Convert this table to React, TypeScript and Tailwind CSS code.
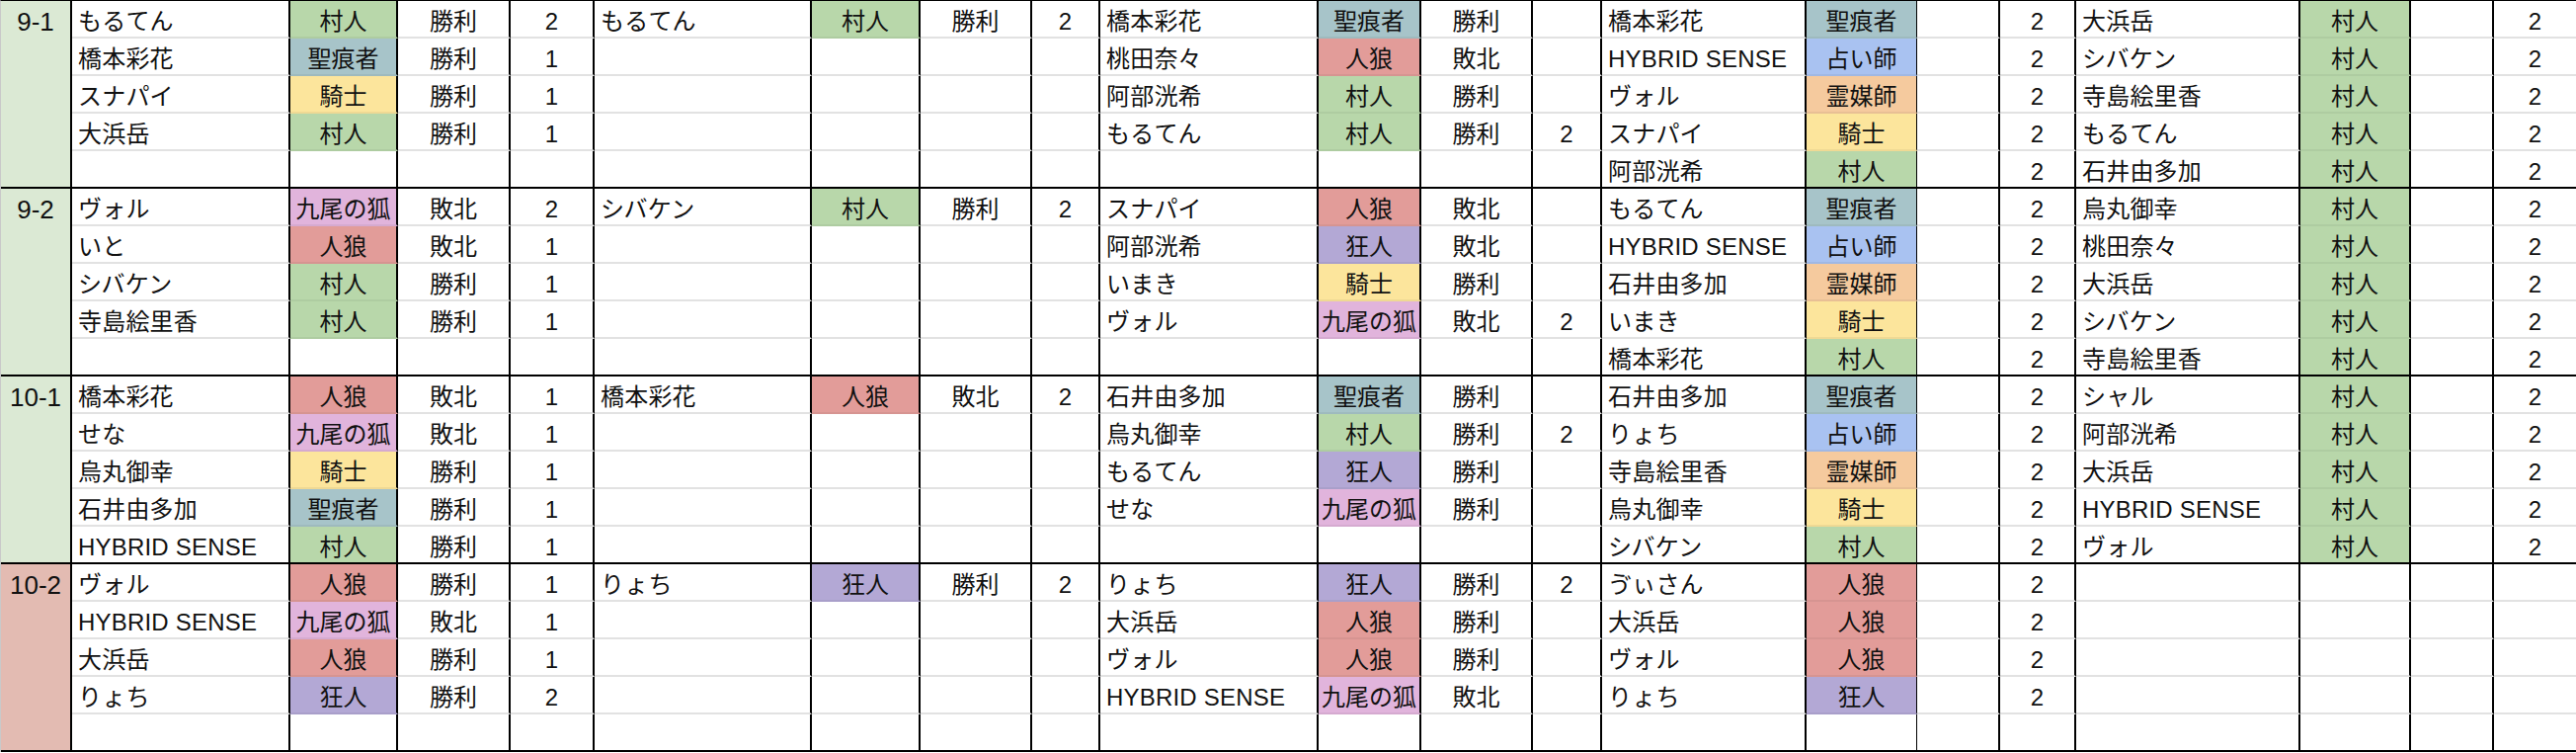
type Group = {
  label: string;
  labelBg: string;
  rows: string[];
};

// each row: A(name|role|result|num) B(...) C(...) D(name|role|num) E(name|role|num)
const groups: Group[] = [
  {
    label: "9-1",
    labelBg: "bg-[#dbe9d4]",
    rows: [
      "もるてん|村人|勝利|2|もるてん|村人|勝利|2|橋本彩花|聖痕者|勝利||橋本彩花|聖痕者|2|大浜岳|村人|2",
      "橋本彩花|聖痕者|勝利|1|||||桃田奈々|人狼|敗北||HYBRID SENSE|占い師|2|シバケン|村人|2",
      "スナパイ|騎士|勝利|1|||||阿部洸希|村人|勝利||ヴォル|霊媒師|2|寺島絵里香|村人|2",
      "大浜岳|村人|勝利|1|||||もるてん|村人|勝利|2|スナパイ|騎士|2|もるてん|村人|2",
      "||||||||||||阿部洸希|村人|2|石井由多加|村人|2",
    ],
  },
  {
    label: "9-2",
    labelBg: "bg-[#dbe9d4]",
    rows: [
      "ヴォル|九尾の狐|敗北|2|シバケン|村人|勝利|2|スナパイ|人狼|敗北||もるてん|聖痕者|2|烏丸御幸|村人|2",
      "いと|人狼|敗北|1|||||阿部洸希|狂人|敗北||HYBRID SENSE|占い師|2|桃田奈々|村人|2",
      "シバケン|村人|勝利|1|||||いまき|騎士|勝利||石井由多加|霊媒師|2|大浜岳|村人|2",
      "寺島絵里香|村人|勝利|1|||||ヴォル|九尾の狐|敗北|2|いまき|騎士|2|シバケン|村人|2",
      "||||||||||||橋本彩花|村人|2|寺島絵里香|村人|2",
    ],
  },
  {
    label: "10-1",
    labelBg: "bg-[#dbe9d4]",
    rows: [
      "橋本彩花|人狼|敗北|1|橋本彩花|人狼|敗北|2|石井由多加|聖痕者|勝利||石井由多加|聖痕者|2|シャル|村人|2",
      "せな|九尾の狐|敗北|1|||||烏丸御幸|村人|勝利|2|りょち|占い師|2|阿部洸希|村人|2",
      "烏丸御幸|騎士|勝利|1|||||もるてん|狂人|勝利||寺島絵里香|霊媒師|2|大浜岳|村人|2",
      "石井由多加|聖痕者|勝利|1|||||せな|九尾の狐|勝利||烏丸御幸|騎士|2|HYBRID SENSE|村人|2",
      "HYBRID SENSE|村人|勝利|1|||||||||シバケン|村人|2|ヴォル|村人|2",
    ],
  },
  {
    label: "10-2",
    labelBg: "bg-[#e3bbb2]",
    rows: [
      "ヴォル|人狼|勝利|1|りょち|狂人|勝利|2|りょち|狂人|勝利|2|ゔぃさん|人狼|2|||",
      "HYBRID SENSE|九尾の狐|敗北|1|||||大浜岳|人狼|勝利||大浜岳|人狼|2|||",
      "大浜岳|人狼|勝利|1|||||ヴォル|人狼|勝利||ヴォル|人狼|2|||",
      "りょち|狂人|勝利|2|||||HYBRID SENSE|九尾の狐|敗北||りょち|狂人|2|||",
      "|||||||||||||||||",
    ],
  },
];

const roleBg: Record<string, string> = {
  村人: "bg-[#b8d7aa]",
  聖痕者: "bg-[#a7c4c9]",
  騎士: "bg-[#fce59c]",
  人狼: "bg-[#e29c99]",
  九尾の狐: "bg-[#e1b4dc]",
  狂人: "bg-[#b3a8d5]",
  占い師: "bg-[#a9c2f1]",
  霊媒師: "bg-[#f5ca9e]",
};

type Kind = "name" | "role" | "center";

function Cell({
  kind,
  text,
  row,
  edge = "border-r-2",
}: {
  kind: Kind;
  text: string;
  row: number;
  edge?: string;
}) {
  const bg = kind === "role" && text ? roleBg[text] : "bg-white";
  const line =
    row < 4
      ? kind === "role" && text
        ? "border-b-2 border-b-black/5"
        : "border-b-2 border-b-[#e2e2e2]"
      : "";
  return (
    <div
      className={`flex items-center pt-[6px] whitespace-nowrap overflow-hidden border-r-black ${edge} ${line} ${bg} ${
        kind === "name" ? "justify-start pl-[6px] tracking-[0.2px]" : "justify-center"
      }`}
    >
      {text}
    </div>
  );
}

function Row({ fields, row }: { fields: string[]; row: number }) {
  const f = (i: number) => fields[i] ?? "";
  const game = (o: number) => [
    <Cell key={`n${o}`} kind="name" text={f(o)} row={row} />,
    <Cell key={`r${o}`} kind="role" text={f(o + 1)} row={row} />,
    <Cell key={`w${o}`} kind="center" text={f(o + 2)} row={row} />,
    <Cell key={`p${o}`} kind="center" text={f(o + 3)} row={row} />,
  ];
  return (
    <>
      {game(0)}
      {game(4)}
      {game(8)}
      <Cell kind="name" text={f(12)} row={row} />
      <Cell kind="role" text={f(13)} row={row} edge="border-r" />
      <Cell kind="center" text="" row={row} />
      <Cell kind="center" text={f(14)} row={row} />
      <Cell kind="name" text={f(15)} row={row} />
      <Cell kind="role" text={f(16)} row={row} />
      <Cell kind="center" text="" row={row} />
      <Cell kind="center" text={f(17)} row={row} edge="border-r-0" />
    </>
  );
}

export default function App() {
  return (
    <div className="w-[2608px] h-[762px] overflow-hidden bg-white text-[24px] leading-none text-[#111] font-['Liberation_Sans','Noto_Sans_CJK_JP',sans-serif]">
      <div className="border-t border-t-black border-l border-l-[#c9c9c9]">
        {groups.map((g) => (
          <div
            key={g.label}
            className="grid grid-cols-[72px_221px_109px_114px_85px_220px_110px_113px_69px_221px_104px_113px_70px_207px_112px_84px_77px_227px_112px_84px_83px] grid-rows-[38px_38px_38px_38px_36px] border-b-2 border-b-black"
          >
            <div
              className={`row-span-5 flex justify-center pt-[8px] text-[26px] border-r-2 border-r-black ${g.labelBg}`}
            >
              {g.label}
            </div>
            {g.rows.map((r, i) => (
              <Row key={i} fields={r.split("|")} row={i} />
            ))}
          </div>
        ))}
      </div>
    </div>
  );
}
